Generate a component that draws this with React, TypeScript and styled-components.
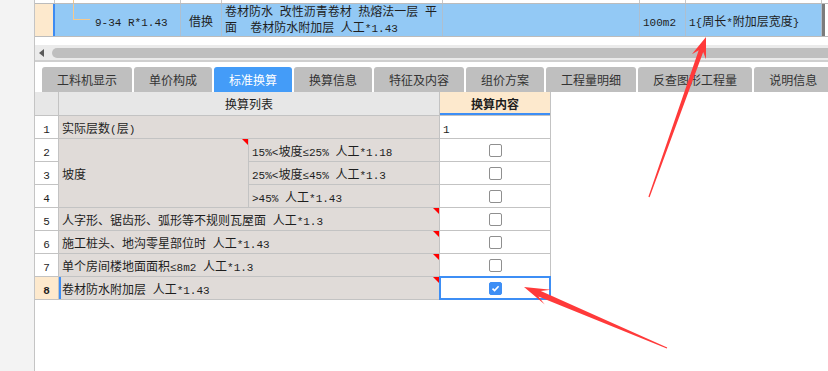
import React from "react";
import styled, { createGlobalStyle } from "styled-components";

const GlobalStyle = createGlobalStyle`
  html, body { margin: 0; padding: 0; background: #fff; }
  body {
    font-family: "Noto Sans CJK SC", "Noto Sans", sans-serif;
    font-size: 12px;
    color: #1e1e1e;
  }
`;

// ascii runs get the narrow mono face, like the original grid font
const Latin = styled.span`
  font-family: "Liberation Mono", monospace;
  font-size: 11px;
`;

const Text = styled.span`
  white-space: pre;
`;

const mix = (text: string) => (
  <Text>
    {text
      .split(/([\x20-\x7e≤]+)/)
      .map((part, i) => (i % 2 ? <Latin key={i}>{part}</Latin> : part))}
  </Text>
);

const Page = styled.div`
  position: relative;
  display: flex;
  width: 828px;
  height: 371px;
  overflow: hidden;
`;

const Gutter = styled.div`
  width: 34px;
  flex: none;
  background: #f3f3f3;
  border-right: 1px solid #c4c4c4;
`;

const Main = styled.div`
  flex: 1;
  min-width: 0;
  display: flex;
  flex-direction: column;
`;

/* ---------- top list ---------- */

const ListRow = styled.div<{ $h: number }>`
  display: flex;
  height: ${(p) => p.$h}px;
  border-bottom: 1px solid #bcbcbc;
`;

const ListCell = styled.div<{ $w: number; $sel?: boolean; $center?: boolean }>`
  width: ${(p) => p.$w}px;
  flex: none;
  box-sizing: border-box;
  display: flex;
  align-items: center;
  justify-content: ${(p) => (p.$center ? "center" : "flex-start")};
  padding-left: ${(p) => (p.$center ? 0 : 3)}px;
  border-right: 1px solid ${(p) => (p.$sel ? "#aebfcf" : "#c8c8c8")};
  background: ${(p) => (p.$sel ? "#93c9f5" : "#fff")};
  white-space: pre;
`;

const MarkCell = styled.div<{ $sel?: boolean }>`
  width: 20px;
  flex: none;
  box-sizing: border-box;
  background: ${(p) => (p.$sel ? "#fde9cd" : "#fff")};
  border-right: ${(p) => (p.$sel ? "2px solid #3d8bf2" : "1px solid #c8c8c8")};
`;

const CodeCell = styled(ListCell)`
  padding-left: 18px;
`;

const Connector = styled.span<{ $h: number; $elbow?: boolean }>`
  align-self: flex-start;
  flex: none;
  width: ${(p) => (p.$elbow ? 16 : 1)}px;
  height: ${(p) => p.$h}px;
  border-left: 1px solid #f6c98c;
  border-bottom: ${(p) => (p.$elbow ? "1px solid #f6c98c" : "none")};
  margin-right: 5px;
`;

const TwoLines = styled(ListCell)`
  flex-direction: column;
  align-items: flex-start;
  justify-content: center;
`;

const Line = styled.div`
  line-height: 14px;
`;

const EdgeMark = styled.div`
  width: 3px;
  flex: none;
  background: #7c7c7c;
`;

/* ---------- scrollbar ---------- */

const Spacer = styled.div`
  height: 8px;
`;

const ScrollTrack = styled.div`
  height: 15px;
  display: flex;
  align-items: center;
  background: #ebebeb;
  border-bottom: 2px solid #cfcfcf;
  padding-left: 4px;
`;

const ScrollArrow = styled.span`
  width: 0;
  height: 0;
  border-style: solid;
  border-width: 4px 5px 4px 0;
  border-color: transparent #5a5a5a transparent transparent;
  margin-right: 8px;
`;

const ScrollThumb = styled.div`
  flex: 1;
  height: 10px;
  border-radius: 5px 0 0 5px;
  background: #bfbfbf;
`;

/* ---------- tabs ---------- */

const TabBar = styled.div`
  display: flex;
  gap: 2px;
  padding: 5px 0 0 7px;
  overflow: hidden;
`;

const Tab = styled.div<{ $active?: boolean }>`
  flex: none;
  height: 25px;
  padding: 0 15px;
  display: flex;
  align-items: center;
  border-radius: 3px 3px 0 0;
  background: ${(p) => (p.$active ? "#449cf8" : "#bfbfbf")};
  color: ${(p) => (p.$active ? "#fff" : "#333")};
  font-size: 12px;
  white-space: nowrap;
`;

/* ---------- table ---------- */

const Table = styled.div`
  display: grid;
  grid-template-columns: 23px 189px 190px 110px;
  grid-template-rows: 23px repeat(8, 22px);
  gap: 1px;
  width: fit-content;
  background: #c3c3c3;
  border-right: 1px solid #c3c3c3;
  border-bottom: 1px solid #c3c3c3;
`;

const HeadCell = styled.div<{ $span?: number; $peach?: boolean }>`
  grid-column: span ${(p) => p.$span ?? 1};
  display: flex;
  align-items: center;
  justify-content: center;
  background: ${(p) => (p.$peach ? "#fde9cd" : "#e7e7e7")};
  font-weight: ${(p) => (p.$peach ? 700 : 400)};
  box-shadow: ${(p) => (p.$peach ? "inset 0 -2px 0 #3d8ef5" : "none")};
`;

const NumCell = styled.div<{ $active?: boolean }>`
  display: flex;
  align-items: center;
  justify-content: center;
  background: ${(p) => (p.$active ? "#fde9cd" : "#fff")};
  font-weight: ${(p) => (p.$active ? 700 : 400)};
`;

const LabelCell = styled.div<{
  $span?: number;
  $rows?: number;
  $marked?: boolean;
  $focus?: boolean;
}>`
  position: relative;
  grid-column: span ${(p) => p.$span ?? 1};
  grid-row: span ${(p) => p.$rows ?? 1};
  display: flex;
  align-items: center;
  padding-left: 3px;
  background: #e0dbd8;
  overflow: hidden;
  box-shadow: ${(p) => (p.$focus ? "inset 2px 0 0 #3d8ef5" : "none")};

  &::after {
    content: "";
    display: ${(p) => (p.$marked ? "block" : "none")};
    position: absolute;
    top: 0;
    right: 0;
    border-style: solid;
    border-width: 0 6px 6px 0;
    border-color: transparent #f00 transparent transparent;
  }
`;

const ValueCell = styled.div<{ $text?: boolean; $focus?: boolean }>`
  position: relative;
  z-index: ${(p) => (p.$focus ? 1 : 0)};
  display: flex;
  align-items: center;
  justify-content: ${(p) => (p.$text ? "flex-start" : "center")};
  padding-left: ${(p) => (p.$text ? 3 : 0)}px;
  background: #fff;
  outline: ${(p) => (p.$focus ? "2px solid #3d8ef5" : "none")};
  outline-offset: -1px;
`;

const Box = styled.span<{ $on?: boolean }>`
  width: 13px;
  height: 13px;
  box-sizing: border-box;
  display: flex;
  align-items: center;
  justify-content: center;
  border: 1px solid ${(p) => (p.$on ? "#3d8ef5" : "#8f8f8f")};
  border-radius: 2px;
  background: ${(p) => (p.$on ? "#3d8ef5" : "#fff")};
`;

const Overlay = styled.svg`
  position: absolute;
  left: 0;
  top: 0;
  z-index: 5;
  pointer-events: none;
`;

const Check: React.FC<{ on?: boolean }> = ({ on }) => (
  <Box $on={on}>
    {on && (
      <svg width="9" height="9" viewBox="0 0 9 9">
        <path d="M1.5 4.6 L3.6 6.6 L7.6 2.2" fill="none" stroke="#fff" strokeWidth="1.6" />
      </svg>
    )}
  </Box>
);

const tabs = [
  "工料机显示",
  "单价构成",
  "标准换算",
  "换算信息",
  "特征及内容",
  "组价方案",
  "工程量明细",
  "反查图形工程量",
  "说明信息",
];

const lowerRows = [
  { n: 5, label: "人字形、锯齿形、弧形等不规则瓦屋面 人工*1.3" },
  { n: 6, label: "施工桩头、地沟零星部位时 人工*1.43" },
  { n: 7, label: "单个房间楼地面面积≤8m2 人工*1.3" },
];

const slopes = [
  "15%<坡度≤25% 人工*1.18",
  "25%<坡度≤45% 人工*1.3",
  ">45% 人工*1.43",
];

export default function App() {
  return (
    <Page>
      <GlobalStyle />
      <Gutter />
      <Main>
        <ListRow $h={3}>
          <MarkCell />
          <CodeCell $w={126}>
            <Connector $h={3} />
          </CodeCell>
          <ListCell $w={41} />
          <ListCell $w={221} />
          <ListCell $w={197} />
          <ListCell $w={46} />
          <ListCell $w={136} />
        </ListRow>
        <ListRow $h={32}>
          <MarkCell $sel />
          <CodeCell $w={126} $sel>
            <Connector $h={15} $elbow />
            {mix("9-34 R*1.43")}
          </CodeCell>
          <ListCell $w={41} $sel $center>
            借换
          </ListCell>
          <TwoLines $w={221} $sel>
            <Line>{mix("卷材防水 改性沥青卷材 热熔法一层 平")}</Line>
            <Line>{mix("面  卷材防水附加层 人工*1.43")}</Line>
          </TwoLines>
          <ListCell $w={197} $sel />
          <ListCell $w={46} $sel>
            {mix("100m2")}
          </ListCell>
          <ListCell $w={136} $sel>
            {mix("1{周长*附加层宽度}")}
          </ListCell>
          <EdgeMark />
        </ListRow>

        <Spacer />
        <ScrollTrack>
          <ScrollArrow />
          <ScrollThumb />
        </ScrollTrack>

        <TabBar>
          {tabs.map((t) => (
            <Tab key={t} $active={t === "标准换算"}>
              {t}
            </Tab>
          ))}
        </TabBar>

        <Table>
          <HeadCell />
          <HeadCell $span={2}>换算列表</HeadCell>
          <HeadCell $peach>换算内容</HeadCell>

          <NumCell>{mix("1")}</NumCell>
          <LabelCell $span={2}>{mix("实际层数(层)")}</LabelCell>
          <ValueCell $text>{mix("1")}</ValueCell>

          {slopes.map((s, i) => (
            <React.Fragment key={s}>
              <NumCell>{mix(String(i + 2))}</NumCell>
              {i === 0 && (
                <LabelCell $rows={3} $marked>
                  坡度
                </LabelCell>
              )}
              <LabelCell>{mix(s)}</LabelCell>
              <ValueCell>
                <Check />
              </ValueCell>
            </React.Fragment>
          ))}

          {lowerRows.map((r) => (
            <React.Fragment key={r.n}>
              <NumCell>{mix(String(r.n))}</NumCell>
              <LabelCell $span={2} $marked>
                {mix(r.label)}
              </LabelCell>
              <ValueCell>
                <Check />
              </ValueCell>
            </React.Fragment>
          ))}

          <NumCell $active>{mix("8")}</NumCell>
          <LabelCell $span={2} $marked $focus>
            {mix("卷材防水附加层 人工*1.43")}
          </LabelCell>
          <ValueCell $focus>
            <Check on />
          </ValueCell>
        </Table>
      </Main>

      <Overlay width="828" height="371" viewBox="0 0 828 371">
        <polygon
          fill="#ff3a3a"
          points="648.4,196.8 698.7,50.3 691.9,54.3 706,37 706,59.3 703.2,51.9 649.6,197.2"
        />
        <polygon
          fill="#ff3a3a"
          points="666.8,348.6 538.4,296.5 544.8,304.6 524,287 551,289.8 540.8,290.9 667.2,347.4"
        />
      </Overlay>
    </Page>
  );
}
